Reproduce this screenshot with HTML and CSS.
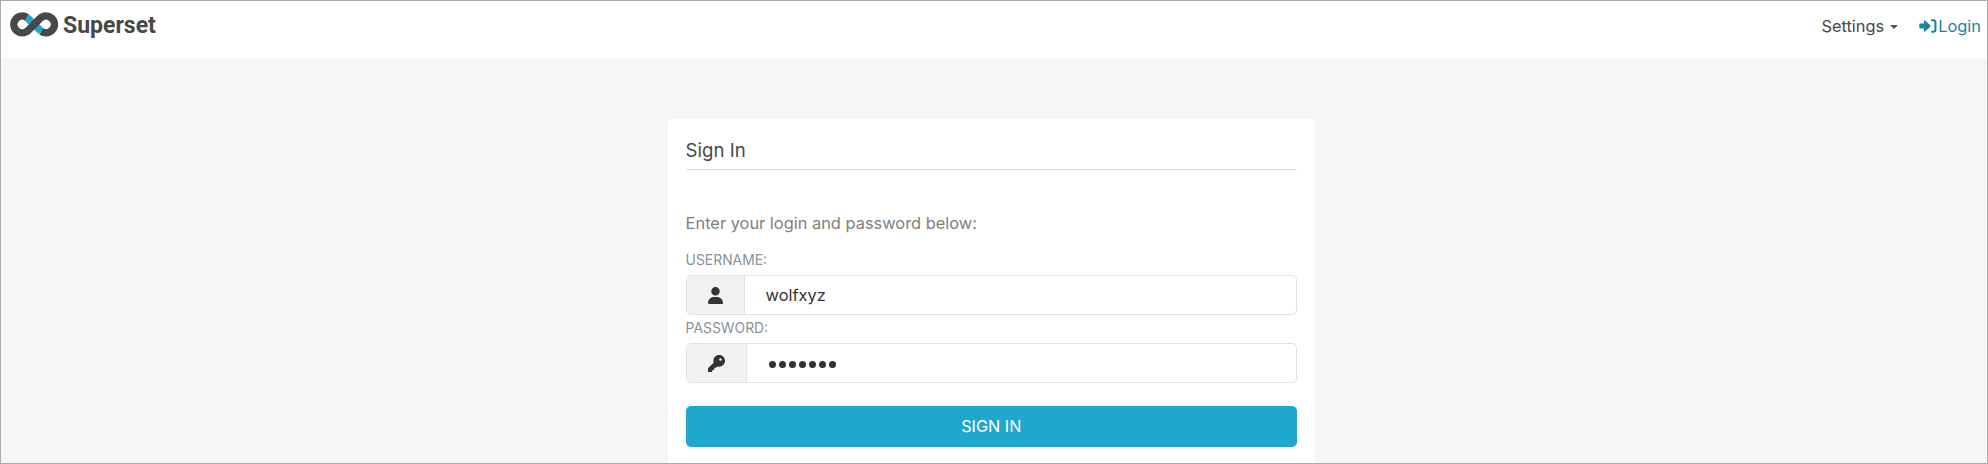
FILE: index.html
```html
<!DOCTYPE html>
<html lang="en">
<head>
<meta charset="utf-8">
<title>Superset</title>
<link rel="stylesheet" href="styles.css">
</head>
<body>
<div class="page">
  <header class="navbar">
    <a class="brand">
      <svg class="brand-mark" width="50" height="27" viewBox="0 0 50 27">
        <g fill="none" stroke-width="7.5">
          <path class="mark-accent" d="M18 6.5 L32.3 20.4"/>
          <path class="mark-main" d="M18 6.5 A8.4 8.4 0 1 0 19.2 19.4 L31.1 7.4 A8.4 8.4 0 1 1 32.3 20.4"/>
        </g>
      </svg>
      <span class="brand-name">Superset</span>
    </a>
    <nav class="menu">
      <a class="settings">Settings</a>
      <span class="caret"></span>
      <a class="login">
        <svg width="18" height="16" viewBox="0 0 18 16"><path fill="currentColor" stroke="currentColor" stroke-width="1.4" stroke-linejoin="round" d="M1 6.3H5.6V3L11 8 5.6 13V9.7H1Z"/><path fill="none" stroke="currentColor" stroke-width="2.1" stroke-linecap="round" d="M13 2.2H14.4Q16.4 2.2 16.4 4.2V11.8Q16.4 13.8 14.4 13.8H13"/></svg>
        <span>Login</span>
      </a>
    </nav>
  </header>
  <main class="content">
    <form class="card">
      <h1 class="title">Sign In</h1>
      <p class="help">Enter your login and password below:</p>
      <div class="label">Username:</div>
      <div class="field">
        <span class="addon addon-user">
          <svg width="15" height="17" viewBox="0 0 448 512" fill="currentColor"><path d="M224 256a128 128 0 1 0 0-256 128 128 0 1 0 0 256zM178 304C80 304 0 384 0 482c0 17 13 30 30 30h388c17 0 30-13 30-30 0-98-80-178-178-178z"/></svg>
        </span>
        <span class="value">wolfxyz</span>
      </div>
      <div class="label">Password:</div>
      <div class="field">
        <span class="addon addon-key">
          <svg width="17" height="17" viewBox="0 0 512 512" fill="currentColor"><path d="M336 352c97 0 176-79 176-176S433 0 336 0 160 79 160 176c0 19 3 37 9 54L7 391c-5 5-7 11-7 17v80c0 13 11 24 24 24h80c13 0 24-11 24-24v-40h40c13 0 24-11 24-24v-40h40c6 0 12-2 17-7l33-34c17 6 35 9 54 9zm40-256a40 40 0 1 1 0 80 40 40 0 1 1 0-80z"/></svg>
        </span>
        <span class="dots"><i></i><i></i><i></i><i></i><i></i><i></i><i></i></span>
      </div>
      <button class="submit" type="button">Sign In</button>
    </form>
  </main>
</div>
</body>
</html>
```
FILE: styles.css
```css
* { box-sizing: border-box; }
body { margin: 0; font-family: Inter, "Liberation Sans", sans-serif; color: #484848; }
.page {
  height: 464px;
  border: 1px solid #ababab;
  background: #f6f6f6;
  overflow: hidden;
}
.navbar {
  display: flex;
  justify-content: space-between;
  height: 57px;
  padding: 0 6px 0 8px;
  background: #fff;
}
.brand { display: flex; padding-top: 10px; }
.mark-accent { stroke: #20a7c9; }
.mark-main { stroke: #484848; }
.brand-name {
  margin-left: 4px;
  padding-top: 1px;
  font: 700 23px/28px Roboto, sans-serif;
}
.menu { display: flex; align-items: center; height: 50px; font-size: 16.4px; }
.caret {
  margin: 2px 21px 0 6px;
  border: 4px solid transparent;
  border-top: 4px solid #555;
  border-bottom: 0;
}
.login { display: flex; align-items: center; gap: 1px; color: #1985a0; }
.content { display: flex; padding: 61px 0 0 667px; }
.card {
  width: 646px;
  height: 344px;
  padding: 0 17px 0 17.6px;
  border-radius: 4px 4px 0 0;
  background: #fff;
}
.title {
  height: 51px;
  margin: 0;
  padding-top: 18.5px;
  border-bottom: 1px solid #ddd;
  font-size: 18.6px;
  font-weight: 400;
  line-height: 24px;
}
.help { margin: 41px 0 13px; font-size: 16.4px; line-height: 24px; color: #808080; }
.label {
  height: 27px;
  padding-top: 3px;
  font-size: 13.9px;
  line-height: 18px;
  text-transform: uppercase;
  color: #879399;
}
.field {
  display: flex;
  height: 40px;
  margin-bottom: 1px;
  border: 1px solid #e0e0e0;
  border-radius: 5px;
  overflow: hidden;
  color: #333;
}
.addon {
  display: flex;
  align-items: center;
  justify-content: center;
  border-right: 1px solid #e0e0e0;
  background: #f2f2f2;
}
.addon-user { width: 58px; }
.addon-key { width: 60px; }
.value { padding-left: 21px; font-size: 16.4px; line-height: 38px; }
.dots { display: flex; align-items: center; gap: 2.6px; padding: 3px 0 0 22px; }
.dots i { width: 7.4px; height: 7.4px; border-radius: 50%; background: #333; }
.submit {
  display: block;
  width: 100%;
  height: 41px;
  margin-top: 23px;
  padding: 0;
  border: 0;
  border-radius: 5px;
  background: #20a7cd;
  color: #fff;
  font: 400 16.2px/41px Inter, sans-serif;
  text-transform: uppercase;
}
```
